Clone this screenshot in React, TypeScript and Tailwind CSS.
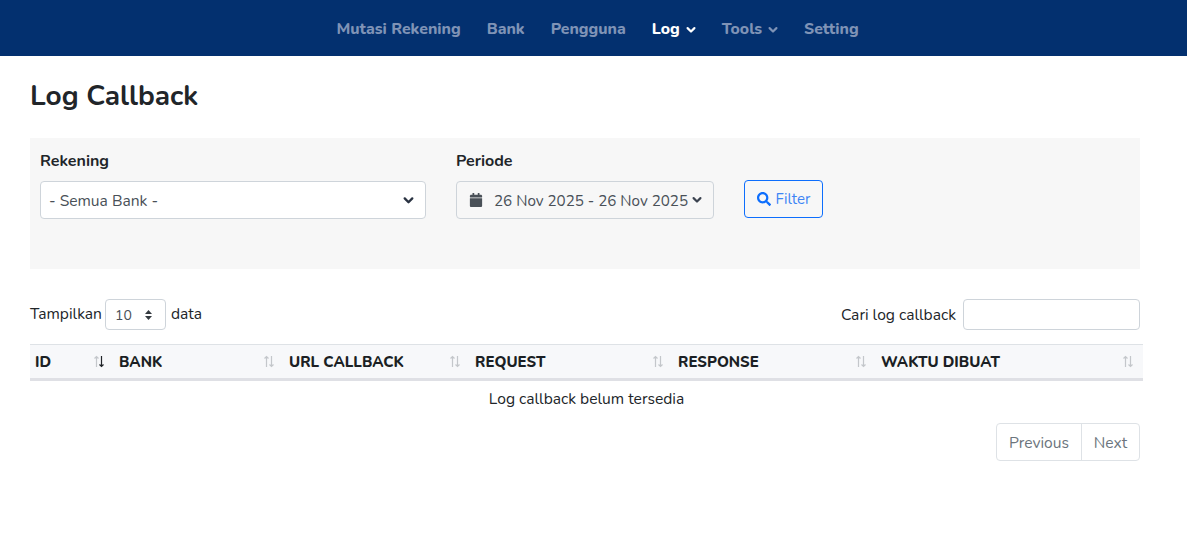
import React from "react";
import { FaCalendar, FaSearch } from "react-icons/fa";

const font = "font-['Nunito','Noto_Sans',sans-serif]";

function Chevron({ className }: { className?: string }) {
  return (
    <svg viewBox="0 0 16 16" className={className} fill="none" stroke="currentColor" strokeWidth="3.4" strokeLinecap="round" strokeLinejoin="round">
      <path d="M2.5 5l5.5 5.5L13.5 5" />
    </svg>
  );
}

function SortIcon({ active }: { active?: boolean }) {
  return (
    <svg width="12" height="13" viewBox="0 0 12 13" fill="none" strokeWidth="1.2" className="shrink-0">
      <g stroke="#c4c7cb">
        <path d="M3.5 12V1.5M1.5 3.5l2-2 2 2" />
      </g>
      <g stroke={active ? "#212529" : "#c4c7cb"}>
        <path d="M8.5 1v10.5M6.5 9.5l2 2 2-2" />
      </g>
    </svg>
  );
}

const columns = [
  { label: "ID", w: "w-[84px]", active: true },
  { label: "BANK", w: "w-[170px]" },
  { label: "URL CALLBACK", w: "w-[186px]" },
  { label: "REQUEST", w: "w-[203px]" },
  { label: "RESPONSE", w: "w-[203px]" },
  { label: "WAKTU DIBUAT", w: "w-[267px]" },
];

function NavItem({ label, active, caret }: { label: string; active?: boolean; caret?: boolean }) {
  return (
    <a className={`flex items-center gap-[6px] text-[15.8px] leading-[22px] font-extrabold ${active ? "text-white" : "text-[#7f93b6]"}`}>
      {label}
      {caret && <Chevron className="w-[10px] h-[10px] mt-[2px]" />}
    </a>
  );
}

export default function App() {
  return (
    <div className={`${font} min-h-[539px] bg-white text-[#212529] text-[15.6px]`}>
      <nav className="h-14 bg-[#03306f] flex items-center justify-center gap-[26px] pl-[8px] pt-[2px]">
        <NavItem label="Mutasi Rekening" />
        <NavItem label="Bank" />
        <NavItem label="Pengguna" />
        <NavItem label="Log" active caret />
        <NavItem label="Tools" caret />
        <NavItem label="Setting" />
      </nav>

      <main className="ml-[30px] w-[1110px]">
        <h1 className="text-[28px] leading-[34px] font-bold mt-[23px] text-[#212529]">Log Callback</h1>

        <section className="mt-[25px] h-[131px] bg-[#f7f7f7] pt-[13px] pl-[10px] flex items-start">
          <div className="w-[386px]">
            <label className="block font-bold text-[16px] leading-[20px]">Rekening</label>
            <div className="mt-[10px] h-[38px] bg-white border border-[#ced4da] rounded-[4px] flex items-center justify-between pl-[8px] pr-[11px] text-[#495057]">
              <span className="pt-[3px]">- Semua Bank -</span>
              <Chevron className="w-[11px] h-[11px] text-[#2a3342]" />
            </div>
          </div>
          <div className="ml-[30px] w-[258px]">
            <label className="block font-bold text-[16px] leading-[20px]">Periode</label>
            <div className="mt-[10px] h-[38px] bg-[#f7f7f7] border border-[#ced4da] rounded-[4px] flex items-center pl-[12px] pr-[11px] text-[#495057]">
              <FaCalendar className="text-[14px] text-[#495057] shrink-0" />
              <span className="ml-[11px] pt-[2px] text-[15.2px] whitespace-nowrap">26 Nov 2025 - 26 Nov 2025</span>
              <Chevron className="w-[10px] h-[10px] ml-auto text-[#3b4350] shrink-0" />
            </div>
          </div>
          <button className="ml-[30px] mt-[29px] w-[79px] h-[38px] border border-[#0d6efd] rounded-[4px] text-[#3d85f5] text-[15px] flex items-center justify-center gap-[5px]">
            <FaSearch className="text-[14px] text-[#0d6efd]" />
            <span className="pt-[1px]">Filter</span>
          </button>
        </section>

        <div className="mt-[30px] flex items-center justify-between h-[31px]">
          <div className="flex items-center text-[#212529]">
            <span>Tampilkan</span>
            <div className="ml-[3px] w-[61px] h-[31px] border border-[#ced4da] rounded-[4px] flex items-center justify-between pl-[9px] pr-[12px] text-[14px] text-[#495057]">
              <span className="pt-[1px]">10</span>
              <svg width="9" height="12" viewBox="0 0 9 12" fill="#343a40"><path d="M4.5 1L8 5H1zM4.5 11L1 7h7z" /></svg>
            </div>
            <span className="ml-[5px]">data</span>
          </div>
          <div className="flex items-center gap-[7px]">
            <span className="pt-[2px]">Cari log callback</span>
            <input className="w-[177px] h-[31px] border border-[#ced4da] rounded-[4px] bg-white" />
          </div>
        </div>

        <div className="mt-[14px] w-[1113px]">
          <div className="flex h-[37px] bg-[#f7f8fa] border-t border-[#dee2e6] border-b-[3px] border-b-[#dfe0e5]">
            {columns.map((c) => (
              <div key={c.label} className={`${c.w} flex items-center justify-between pl-[5px] pr-[9px] text-[#1b1f24]`}>
                <span className="whitespace-nowrap font-extrabold text-[15px] pt-[1px]">{c.label}</span>
                <SortIcon active={c.active} />
              </div>
            ))}
          </div>
          <div className="text-center leading-[20px] mt-[8px]">Log callback belum tersedia</div>
        </div>

        <div className="mt-[14px] flex justify-end">
          <div className="flex h-[38px] border border-[#dee2e6] rounded-[4px] text-[#6c757d]">
            <span className="w-[85px] pt-[3px] flex items-center justify-center border-r border-[#dee2e6]">Previous</span>
            <span className="w-[57px] pt-[3px] flex items-center justify-center">Next</span>
          </div>
        </div>
      </main>
    </div>
  );
}
